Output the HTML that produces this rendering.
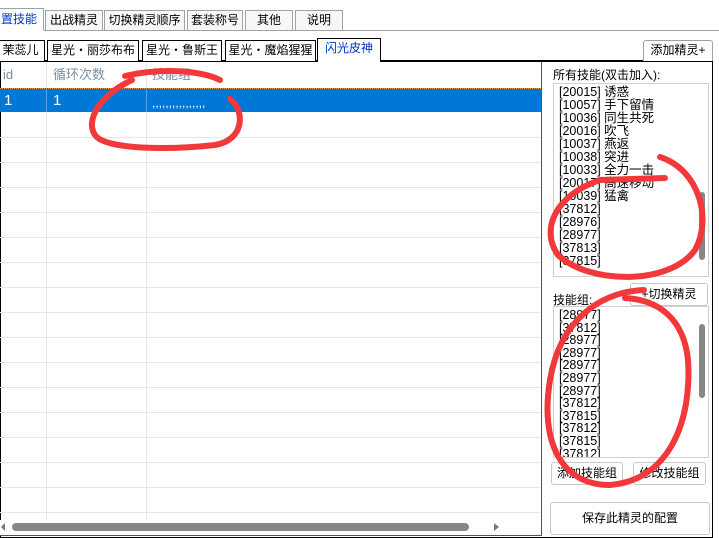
<!DOCTYPE html><html><head><meta charset="utf-8"><style>
body{margin:0;width:719px;height:538px;background:#fff;position:relative;overflow:hidden;font-family:"Liberation Sans","Noto Sans CJK SC",sans-serif;font-size:12px;color:#000}
.a{position:absolute;box-sizing:border-box}
.t{position:absolute;box-sizing:border-box;border:1px solid #9aa4ab;border-bottom:none;background:#f7f7f7;text-align:center;line-height:19px;font-size:12px}
.t2{position:absolute;box-sizing:border-box;border:1px solid #000;border-bottom:none;background:#fff;text-align:center;line-height:19px;font-size:12px}
.hl{position:absolute;left:0;width:541px;height:1px;background:#e6e6e6}
.list div{height:13px;line-height:13px;font-size:12.5px;white-space:nowrap}
.list2 div{height:12.6px;line-height:12.6px;font-size:12.5px;white-space:nowrap}
.btn{position:absolute;box-sizing:border-box;border:1px solid #c8c8c8;border-radius:3px;background:#fff;text-align:center;font-size:12px}
</style></head><body>
<div class="a" style="left:0;top:30px;width:719px;height:1px;background:#9aa4ab"></div>
<div class="t" style="left:-6px;top:8px;width:50px;height:23px;background:#fff;color:#0033cc;border-bottom:1px solid #fff;line-height:21px">置技能</div>
<div class="t" style="left:45px;top:10px;width:58px;height:20px">出战精灵</div>
<div class="t" style="left:104px;top:10px;width:81px;height:20px">切换精灵顺序</div>
<div class="t" style="left:187px;top:10px;width:56px;height:20px">套装称号</div>
<div class="t" style="left:245px;top:10px;width:48px;height:20px">其他</div>
<div class="t" style="left:295px;top:10px;width:48px;height:20px">说明</div>
<div class="a" style="left:0;top:60px;width:713px;height:478px;border:1px solid #000;border-top:2px solid #000"></div>
<div class="t2" style="left:-4px;top:40px;width:49px;height:21px">茉蕊儿</div>
<div class="t2" style="left:47px;top:40px;width:92px;height:21px">星光・丽莎布布</div>
<div class="t2" style="left:142px;top:40px;width:80px;height:21px">星光・鲁斯王</div>
<div class="t2" style="left:225px;top:40px;width:91px;height:21px">星光・魔焰猩猩</div>
<div class="t2" style="left:317px;top:38px;width:64px;height:24px;color:#0033cc;border-color:#000;border-bottom:none">闪光皮神</div>
<div class="t2" style="left:643px;top:40px;width:70px;height:21px;border-color:#9aa4ab;border-radius:3px 3px 0 0">添加精灵+</div>
<div class="a" style="left:0;top:62px;width:542px;height:474px;border-right:1px solid #1f5fa8;border-bottom:1px solid #1f5fa8"></div>
<div class="a" style="left:0;top:62px;width:541px;height:26px;color:#7a8ea3;font-size:13px;line-height:26px"><span style="position:absolute;left:3px">id</span><span style="position:absolute;left:53px">循环次数</span><span style="position:absolute;left:152px">技能组</span></div>
<div class="a" style="left:0;top:88px;width:541px;height:24px;background:#0078d7;color:#fff;font-size:15px;line-height:24px;border-top:1px dotted #e89c4a"><span style="position:absolute;left:4px">1</span><span style="position:absolute;left:53px">1</span><span style="position:absolute;left:152px;font-size:12px;top:2px">,,,,,,,,,,,,,,,,</span></div>
<div class="a" style="left:46px;top:62px;width:1px;height:458px;background:#e6e6e6"></div>
<div class="a" style="left:146px;top:62px;width:1px;height:458px;background:#e6e6e6"></div>
<div class="a" style="left:46px;top:88px;width:1px;height:24px;background:#5aa0e6"></div>
<div class="a" style="left:146px;top:88px;width:1px;height:24px;background:#5aa0e6"></div>
<div class="hl" style="top:137px"></div><div class="hl" style="top:162px"></div><div class="hl" style="top:187px"></div><div class="hl" style="top:212px"></div><div class="hl" style="top:237px"></div><div class="hl" style="top:262px"></div><div class="hl" style="top:287px"></div><div class="hl" style="top:312px"></div><div class="hl" style="top:337px"></div><div class="hl" style="top:362px"></div><div class="hl" style="top:387px"></div><div class="hl" style="top:412px"></div><div class="hl" style="top:437px"></div><div class="hl" style="top:462px"></div><div class="hl" style="top:487px"></div><div class="hl" style="top:512px"></div>
<div class="a" style="left:0;top:520px;width:541px;height:15px;background:#fff"></div>
<div class="a" style="left:12px;top:523px;width:457px;height:8px;background:#878787;border-radius:4px"></div>
<div class="a" style="left:1px;top:523px;width:0;height:0;border:4px solid transparent;border-right-color:#777;border-left:none"></div>
<div class="a" style="left:494px;top:523px;width:0;height:0;border:4px solid transparent;border-left:5px solid #777;border-right:none"></div>
<div class="a" style="left:553px;top:66px;color:#000;font-size:12px">所有技能(双击加入):</div>
<div class="a list" style="left:553px;top:83px;width:156px;height:194px;border:1px solid #d0d0d0;padding:2px 0 0 5px">
<div>[20015] 诱惑</div><div>[10057] 手下留情</div><div>[10036] 同生共死</div><div>[20016] 吹飞</div><div>[10037] 燕返</div><div>[10038] 突进</div><div>[10033] 全力一击</div><div>[20017] 高速移动</div><div>[10039] 猛禽</div><div>[37812]</div><div>[28976]</div><div>[28977]</div><div>[37813]</div><div>[37815]</div></div>
<div class="a" style="left:699px;top:192px;width:6px;height:68px;background:#878787;border-radius:3px"></div>
<div class="btn" style="left:630px;top:283px;width:78px;height:23px;line-height:21px">+切换精灵</div>
<div class="a" style="left:553px;top:291px">技能组:</div>
<div class="a list2" style="left:553px;top:306px;width:156px;height:152px;border:1px solid #d0d0d0;padding:2px 0 0 5px;overflow:hidden">
<div>[28977]</div><div>[37812]</div><div>[28977]</div><div>[28977]</div><div>[28977]</div><div>[28977]</div><div>[28977]</div><div>[37812]</div><div>[37815]</div><div>[37812]</div><div>[37815]</div><div>[37812]</div></div>
<div class="a" style="left:699px;top:324px;width:6px;height:74px;background:#878787;border-radius:3px"></div>
<div class="btn" style="left:551px;top:462px;width:72px;height:23px;line-height:21px">添加技能组</div>
<div class="btn" style="left:633px;top:462px;width:73px;height:23px;line-height:21px">修改技能组</div>
<div class="btn" style="left:550px;top:502px;width:160px;height:33px;line-height:31px">保存此精灵的配置</div>
<svg class="a" style="left:0;top:0" width="719" height="538"><g fill="none" stroke="#f2383b" stroke-width="6" stroke-linecap="round">
<path d="M125 76 C160 68 200 70 220 80 M132 80 C100 95 85 120 95 135 C105 150 170 150 215 145 C245 140 245 110 230 99"/>
<path d="M660 157 C700 170 712 220 695 250 C670 285 590 285 558 255 C540 230 555 195 600 180 L665 178"/>
<path d="M644 290 C600 292 560 320 550 380 C540 440 560 485 610 485 C670 480 692 420 688 360 C684 320 660 300 625 298"/>
</g></svg>
</body></html>
